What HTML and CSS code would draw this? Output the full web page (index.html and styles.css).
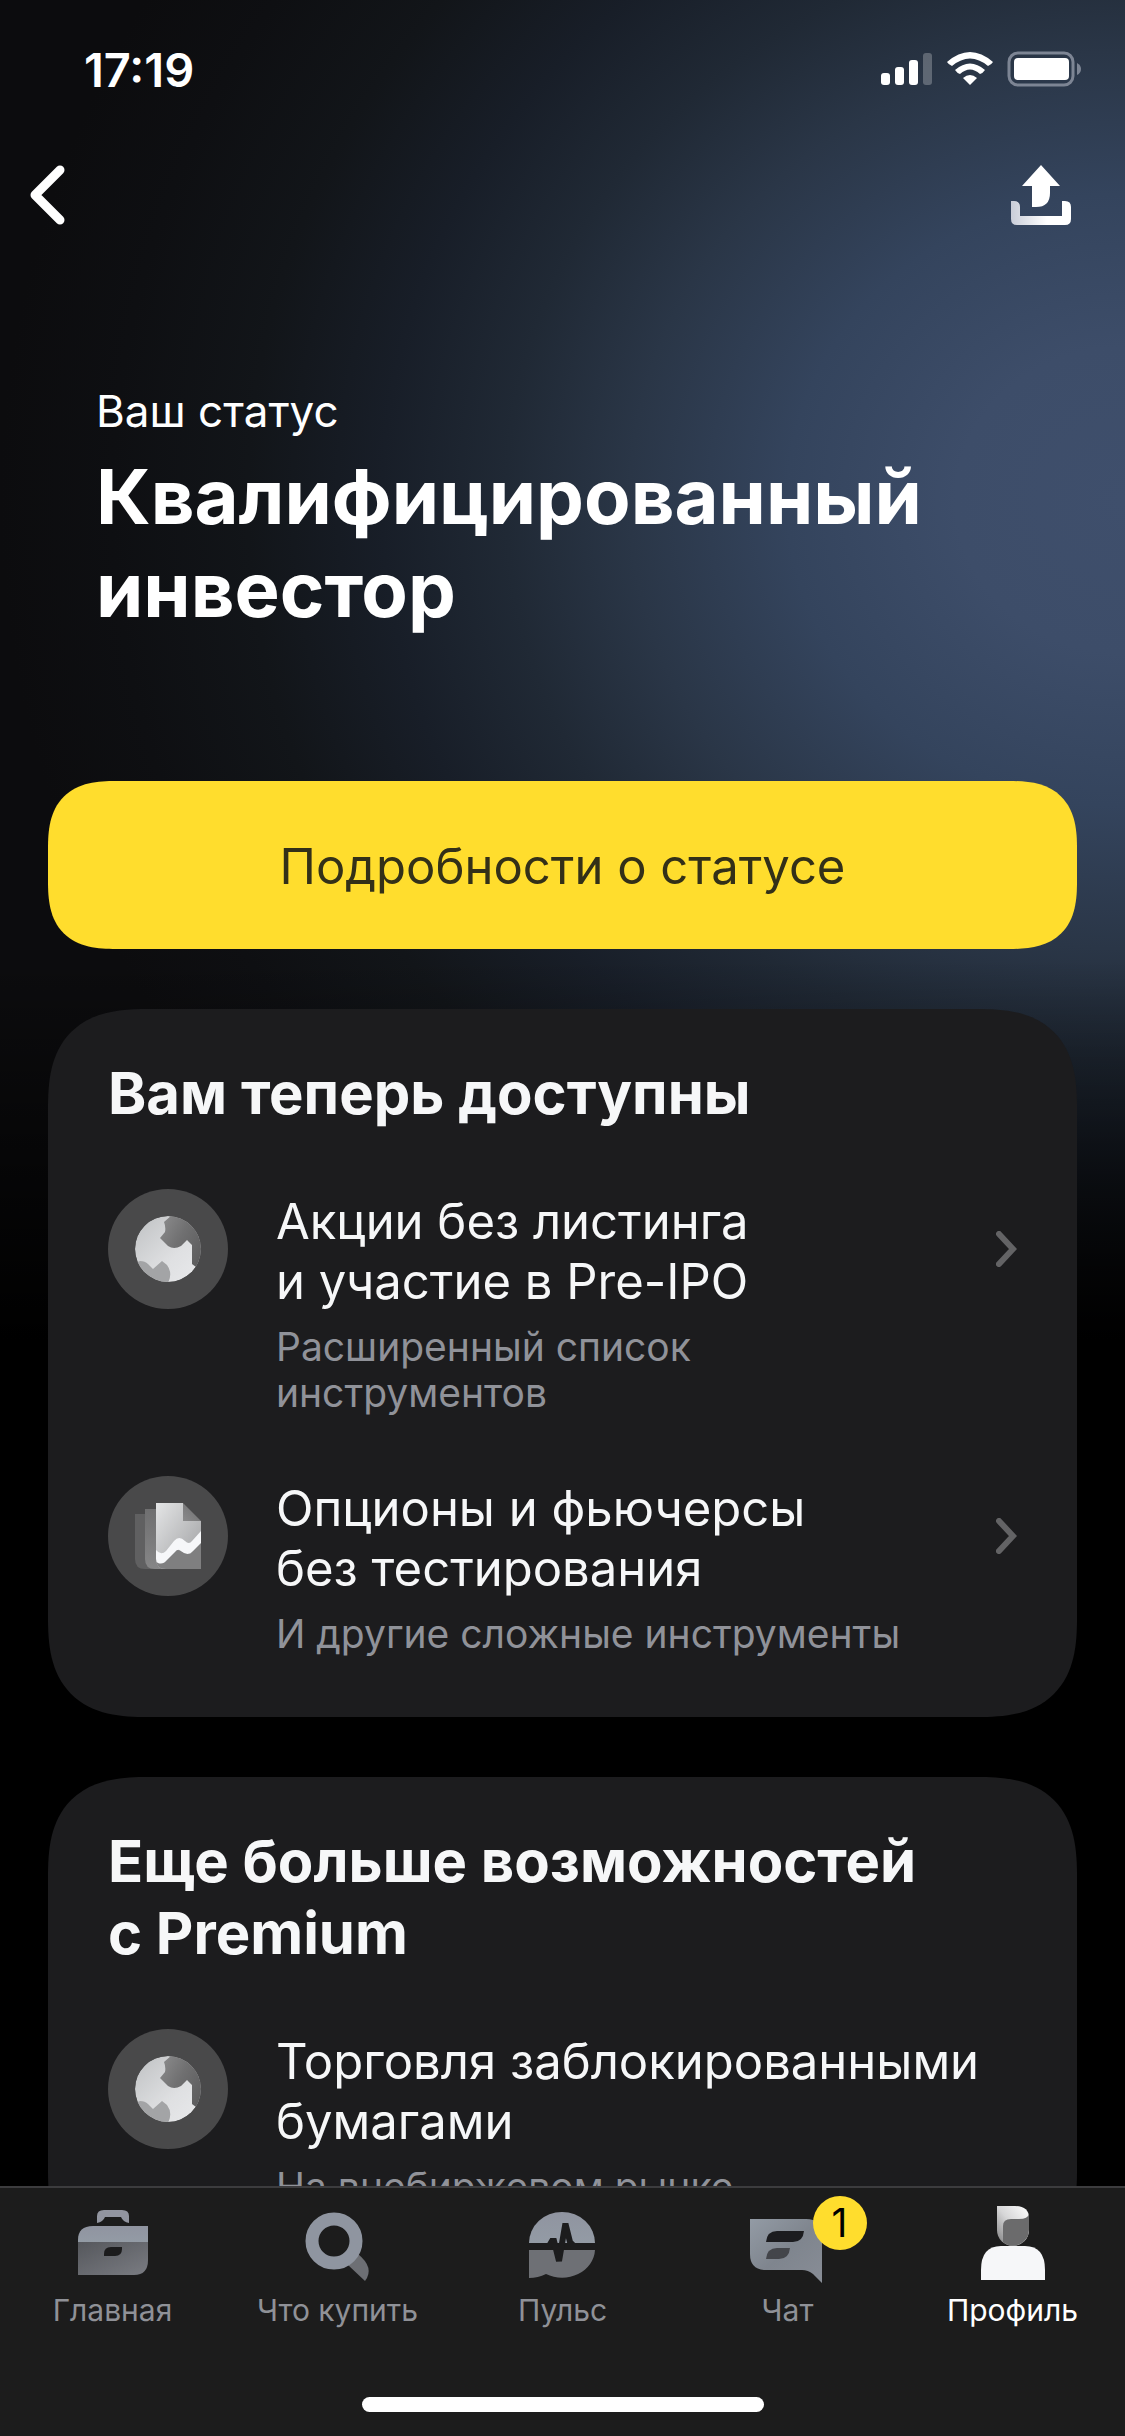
FILE: index.html
```html
<!DOCTYPE html>
<html lang="ru">
<head>
    <meta charset="UTF-8">
    <meta name="viewport" content="width=device-width, initial-scale=1.0">
    <title>Статус инвестора</title>
    <link rel="stylesheet" href="styles.css">
</head>
<body>
    <!-- Общие иконки и градиенты -->
    <svg class="defs" width="0" height="0" aria-hidden="true">
        <defs>
            <linearGradient id="g-light" x1="0" y1="0" x2="1" y2="1">
                <stop offset="0" stop-color="#bfc1c3"/>
                <stop offset="0.6" stop-color="#dfe0e2"/>
                <stop offset="1" stop-color="#e9eaec"/>
            </linearGradient>
            <linearGradient id="g-shade" x1="0" y1="0" x2="1" y2="0.6">
                <stop offset="0" stop-color="#8e8e8f"/>
                <stop offset="0.5" stop-color="#707071"/>
                <stop offset="1" stop-color="#5c5c5d"/>
            </linearGradient>
            <linearGradient id="g-page" x1="0" y1="0" x2="1" y2="1">
                <stop offset="0" stop-color="#e4e5e6"/>
                <stop offset="1" stop-color="#9c9d9f"/>
            </linearGradient>
            <linearGradient id="g-fold" x1="0" y1="1" x2="1" y2="0">
                <stop offset="0" stop-color="#8b8b8c"/>
                <stop offset="1" stop-color="#6b6b6c"/>
            </linearGradient>
            <linearGradient id="g-back" x1="0" y1="0" x2="0" y2="1">
                <stop offset="0" stop-color="#6f6f70"/>
                <stop offset="1" stop-color="#868687"/>
            </linearGradient>
            <linearGradient id="g-tray" x1="0" y1="0" x2="1" y2="0">
                <stop offset="0" stop-color="#c9cdd8"/>
                <stop offset="0.6" stop-color="#ffffff"/>
            </linearGradient>
            <linearGradient id="g-tab" x1="0" y1="0" x2="0" y2="1">
                <stop offset="0" stop-color="#9094a0"/>
                <stop offset="1" stop-color="#939ba5"/>
            </linearGradient>
            <linearGradient id="g-tab-dark" x1="0" y1="0" x2="1" y2="1">
                <stop offset="0" stop-color="#55575c"/>
                <stop offset="1" stop-color="#7a7c82"/>
            </linearGradient>
            <linearGradient id="g-chat" x1="0" y1="0" x2="1" y2="1">
                <stop offset="0" stop-color="#939ba5"/>
                <stop offset="0.5" stop-color="#7f858e"/>
                <stop offset="1" stop-color="#888d96"/>
            </linearGradient>
            <linearGradient id="g-hair" x1="1" y1="0" x2="0" y2="1">
                <stop offset="0" stop-color="#ffffff"/>
                <stop offset="0.5" stop-color="#d6d6d7"/>
                <stop offset="1" stop-color="#7c7c7d"/>
            </linearGradient>
            <clipPath id="c-globe"><circle cx="60" cy="60" r="33"/></clipPath>
        </defs>
        <symbol id="i-globe" viewBox="0 0 120 120">
            <circle cx="60" cy="60" r="60" fill="#49494a"/>
            <g clip-path="url(#c-globe)">
                <circle cx="60" cy="60" r="33" fill="url(#g-light)"/>
                <path d="M64 26L56 33Q58 38 57 43L52 49L60 57Q66 61 73 57L79 51L84 56V75L88 78L100 70V26Z" fill="url(#g-shade)"/>
                <path d="M24 75L32 72Q37 72 40 75L45 80L54 72L59 76Q65 84 60 94L50 96L24 90Z" fill="#a3a4a6"/>
            </g>
        </symbol>
        <symbol id="i-chevron" viewBox="0 0 21 36">
            <path d="M3 3L17 18L3 33" fill="none" stroke="#636365" stroke-width="6" stroke-linecap="round"/>
        </symbol>
    </svg>

    <div class="app">
        <div class="screen">
            <div class="status-bar">
                <time class="clock">17:19</time>
                <svg class="status-icons" viewBox="0 0 202 36" aria-hidden="true">
                    <g fill="#fff">
                        <rect x="0" y="22" width="9" height="12" rx="3"/>
                        <rect x="14" y="16" width="9" height="18" rx="3"/>
                        <rect x="28" y="9" width="9" height="25" rx="3"/>
                        <rect x="42" y="2" width="9" height="32" rx="3" opacity="0.25"/>
                        <path d="M66 11Q89 -9 112 11Q111 13 107 15Q89 0 71 15Q67 13 66 11Z"/>
                        <path d="M74 19Q89 6 104 19Q102 22 99 23Q89 14 79 23Q76 22 74 19Z"/>
                        <path d="M82 27Q89 21 96 27L89 34Z"/>
                        <rect x="133" y="7" width="55" height="22" rx="4"/>
                    </g>
                    <rect x="128" y="2" width="64" height="32" rx="9" fill="none" stroke="#7d8594" stroke-width="3"/>
                    <path d="M196 12Q200 14 200 18Q200 22 196 24Z" fill="#7d8594"/>
                </svg>
            </div>

            <nav class="nav-bar">
                <button type="button" class="nav-btn" aria-label="Назад">
                    <svg width="35" height="60" viewBox="0 0 35 60">
                        <path d="M30 5L5 30L30 55" fill="none" stroke="#fff" stroke-width="9" stroke-linecap="round" stroke-linejoin="round"/>
                    </svg>
                </button>
                <button type="button" class="nav-btn" aria-label="Поделиться">
                    <svg width="60" height="60" viewBox="0 0 60 60">
                        <path d="M30 0L49 21H39V28Q39 42 25 42H21V21H11Z" fill="#fff"/>
                        <path d="M0 36H3Q9 36 9 42V51H51V36H54Q60 36 60 42V54Q60 60 54 60H6Q0 60 0 54Z" fill="url(#g-tray)"/>
                    </svg>
                </button>
            </nav>

            <header class="hero">
                <p class="hero-label">Ваш статус</p>
                <h1>Квалифицированный инвестор</h1>
            </header>

            <main>
                <button type="button" class="btn-primary">Подробности о статусе</button>

                <section class="card">
                    <h2>Вам теперь доступны</h2>
                    <a href="#" class="row">
                        <svg class="row-icon"><use href="#i-globe"/></svg>
                        <div class="row-text">
                            <h3>Акции без листинга<br>и участие в Pre-IPO</h3>
                            <p>Расширенный список<br>инструментов</p>
                        </div>
                        <svg class="chevron"><use href="#i-chevron"/></svg>
                    </a>
                    <a href="#" class="row">
                        <svg class="row-icon" viewBox="0 0 120 120">
                            <circle cx="60" cy="60" r="60" fill="#49494a"/>
                            <path d="M27 38H48V93H37Q27 93 27 83Z" fill="#606061"/>
                            <path d="M37 33H60V93H47Q37 93 37 83Z" fill="url(#g-back)"/>
                            <path d="M48 27H75V45H93V93H58Q48 93 48 83Z" fill="url(#g-page)"/>
                            <path d="M75 27L93 45H75Z" fill="url(#g-fold)"/>
                            <path d="M48 82Q53 88 59 82L68 73L75 76L82 78L93 66V93H58Q48 93 48 83Z" fill="#7f7f80"/>
                            <path d="M48 74Q53 80 58 75L66 65Q71 59 77 65Q81 69 84 65L93 55V67L85 75Q80 81 73 75Q70 72 67 76L59 84Q55 89 50 87Q48 86 48 83Z" fill="#f6f7f9"/>
                        </svg>
                        <div class="row-text">
                            <h3>Опционы и фьючерсы<br>без тестирования</h3>
                            <p>И другие сложные инструменты</p>
                        </div>
                        <svg class="chevron"><use href="#i-chevron"/></svg>
                    </a>
                </section>

                <section class="card">
                    <h2>Еще больше возможностей<br>с Premium</h2>
                    <div class="row">
                        <svg class="row-icon"><use href="#i-globe"/></svg>
                        <div class="row-text">
                            <h3>Торговля заблокированными<br>бумагами</h3>
                            <p>На внебиржевом рынке</p>
                        </div>
                    </div>
                </section>
            </main>
        </div>

        <footer class="tab-bar">
            <nav class="tabs">
                <a href="#" class="tab">
                    <svg class="tab-icon" viewBox="0 0 90 90">
                        <path d="M29 27V20Q29 14 36 14H54Q61 14 61 20V27Q55 26 53 21H37Q35 26 29 27Z" fill="#9295a0"/>
                        <path d="M10 46V44Q10 30 25 30H80V46Z" fill="url(#g-tab)"/>
                        <path d="M10 46H80V64Q80 79 66 79H10Z" fill="url(#g-tab-dark)"/>
                        <path d="M36 60V58Q36 51 43 51H54V53Q54 60 47 60Z" fill="#1c1c1d"/>
                    </svg>
                    Главная
                </a>
                <a href="#" class="tab">
                    <svg class="tab-icon" viewBox="0 0 90 90">
                        <path d="M55 69L65 58Q82 72 72 85Z" fill="#6d6f74"/>
                        <circle cx="41" cy="45" r="22" fill="none" stroke="#8f95a0" stroke-width="13"/>
                    </svg>
                    Что купить
                </a>
                <a href="#" class="tab">
                    <svg class="tab-icon" viewBox="0 0 90 90">
                        <path d="M11 47A33 31 0 0 1 77 47Z" fill="url(#g-tab)"/>
                        <path d="M11 54H77A33 29 0 0 1 28 78Q20 82 11 82Z" fill="#6e7075"/>
                        <path d="M11 50H31L34 45H36L41 65L47 30H48L52 46L56 50H77" fill="none" stroke="#1c1c1d" stroke-width="6"/>
                    </svg>
                    Пульс
                </a>
                <a href="#" class="tab">
                    <svg class="tab-icon" viewBox="0 0 90 90">
                        <path d="M7 23H63Q79 23 79 38V87L70 78Q65 74 59 74H23Q7 74 7 58Z" fill="url(#g-chat)"/>
                        <path d="M23 46Q24 35 34 35H61Q60 46 50 46Z" fill="#1c1c1f"/>
                        <path d="M23 63Q24 52 34 52H47Q46 63 36 63Z" fill="#43454a"/>
                    </svg>
                    Чат
                    <span class="badge">1</span>
                </a>
                <a href="#" class="tab tab-active">
                    <svg class="tab-icon" viewBox="0 0 90 90">
                        <path d="M29 10H47Q61 10 61 22V34A16 16 0 0 1 29 34Z" fill="url(#g-hair)"/>
                        <path d="M35 46V30Q35 23 43 23H51Q60 23 61 18V34A16 16 0 0 1 35 46Z" fill="#6b6b6c"/>
                        <path d="M13 84V74Q13 50 33 50H57Q77 50 77 74V84Z" fill="#f6f7f9"/>
                    </svg>
                    Профиль
                </a>
            </nav>
            <div class="home-indicator"></div>
        </footer>
    </div>
</body>
</html>
```
FILE: styles.css
```css
* {
    margin: 0;
    padding: 0;
    box-sizing: border-box;
}

body {
    background: #000;
    color: #f6f7f8;
    font-family: Inter, 'Liberation Sans', sans-serif;
}

a {
    color: inherit;
    text-decoration: none;
}

button {
    border: none;
    font-family: inherit;
    cursor: pointer;
}

svg {
    display: block;
    flex-shrink: 0;
}

.defs {
    position: absolute;
}

.app {
    height: 100vh;
    display: flex;
    flex-direction: column;
}

.screen {
    flex: 1;
    min-height: 0;
    overflow: hidden;
    background:
        linear-gradient(rgba(0, 0, 0, 0) 960px, #000 1340px),
        radial-gradient(1125px 1020px at 100% 500px,
            #3f4f6c 0%, #3d4d69 15%, #34445d 30%, #2a3647 44%,
            #202935 55%, #181e28 66%, #121519 78%, #0e0f12 90%, #0c0c0e 100%);
}

/* Верхние панели */
.status-bar {
    height: 132px;
    padding: 6px 42px 0 84px;
    display: flex;
    justify-content: space-between;
    align-items: center;
}

.clock {
    color: #fff;
    font-size: 47px;
    font-weight: 600;
}

.status-icons {
    width: 202px;
    height: 36px;
}

.nav-bar {
    height: 132px;
    padding: 0 54px 6px 30px;
    display: flex;
    justify-content: space-between;
    align-items: center;
}

.nav-btn {
    background: none;
}

/* Статус */
.hero {
    padding: 120px 96px 0;
    color: #fff;
}

.hero-label {
    font-size: 44px;
    line-height: 54px;
}

h1 {
    margin-top: 12px;
    font-size: 76px;
    font-weight: 700;
    line-height: 93px;
}

main {
    padding: 145px 48px 0;
    display: flex;
    flex-direction: column;
    gap: 60px;
}

.btn-primary {
    height: 168px;
    padding-top: 2px;
    border-radius: 56px;
    background: #ffdd2d;
    color: #333018;
    font-size: 49px;
}

/* Карточки */
.card {
    padding: 48px 60px 60px;
    border-radius: 80px;
    background: #1c1c1e;
}

/* Плавные углы там, где браузер их умеет */
@supports (corner-shape: superellipse(1.4)) {
    .btn-primary {
        border-radius: 68px;
        corner-shape: superellipse(1.4);
    }

    .card {
        border-radius: 100px;
        corner-shape: superellipse(1.4);
    }
}

h2 {
    font-size: 58px;
    font-weight: 700;
    line-height: 72px;
}

.row {
    margin-top: 60px;
    display: flex;
    align-items: flex-start;
}

.row-icon {
    width: 120px;
    height: 120px;
    margin-right: 48px;
}

.row-text {
    flex: 1;
    padding-top: 3px;
    white-space: nowrap;
}

h3 {
    font-size: 49px;
    font-weight: 400;
    line-height: 60px;
}

.row-text p {
    margin-top: 12px;
    color: #909299;
    font-size: 39px;
    line-height: 46px;
}

.chevron {
    width: 21px;
    height: 36px;
    margin-top: 42px;
}

/* Нижняя панель */
.tab-bar {
    height: 250px;
    border-top: 2px solid #3c3c3e;
    background: #1c1c1c;
    display: flex;
    flex-direction: column;
    justify-content: space-between;
    align-items: center;
    padding: 8px 0 24px;
}

.tabs {
    width: 100%;
    display: grid;
    grid-template-columns: repeat(5, 1fr);
}

.tab {
    position: relative;
    display: flex;
    flex-direction: column;
    align-items: center;
    color: #8f9197;
    font-size: 30px;
    line-height: 48px;
}

.tab-active {
    color: #fff;
}

.tab-icon {
    width: 90px;
    height: 90px;
}

.badge {
    position: absolute;
    top: 0;
    left: 50%;
    width: 54px;
    height: 54px;
    margin-left: 25px;
    border-radius: 50%;
    background: #ffdd2d;
    color: #000;
    font-size: 39px;
    line-height: 54px;
    text-align: center;
}

.home-indicator {
    width: 402px;
    height: 15px;
    border-radius: 8px;
    background: #fff;
}
```
